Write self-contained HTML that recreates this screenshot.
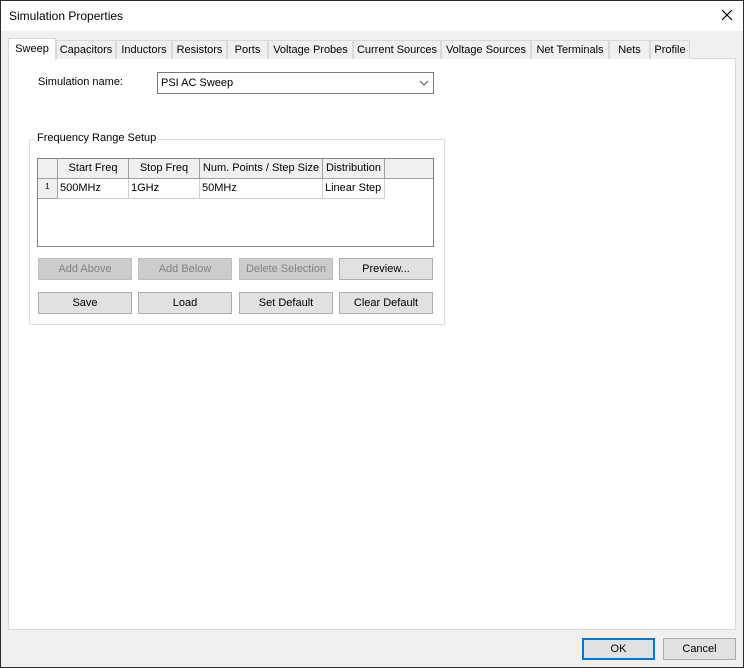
<!DOCTYPE html><html><head><style>
*{box-sizing:border-box;margin:0;padding:0}
body{width:744px;height:668px;background:#f0f0f0;font-family:"Liberation Sans",sans-serif;font-size:11px;color:#000;position:relative;overflow:hidden;white-space:nowrap}
.win{position:absolute;left:0;top:0;width:744px;height:668px;border:1px solid #2b2b2b}
.a{position:absolute}
.title{left:1px;top:1px;width:742px;height:30px;background:#fff}
.tab{position:absolute;top:40px;height:19px;border:1px solid #d9d9d9;border-bottom:none;background:#f0f0f0;text-align:center;line-height:18px;overflow:hidden}
.btn{position:absolute;height:22px;border:1px solid #adadad;background:#e1e1e1;text-align:center;line-height:20px}
.dis{color:#838383;border-color:#bfbfbf;background:#cccccc}
.hc{position:absolute;top:0;height:20px;background:#f0f0f0;border-right:1px solid #a0a0a0;border-bottom:1px solid #a0a0a0;text-align:center;line-height:19px;overflow:hidden}
.dc{position:absolute;top:20px;height:20px;border-right:1px solid #d0d0d0;border-bottom:1px solid #d0d0d0;line-height:19px;padding-left:2px;overflow:hidden}
</style></head><body>
<div class="win"></div>
<div class="a title"></div>
<div class="a" style="left:9px;top:9px;font-size:12px">Simulation Properties</div>
<svg class="a" style="left:721px;top:9px" width="12" height="12"><path d="M1 1L11 11M11 1L1 11" stroke="#000" stroke-width="1.2"/></svg>
<div class="a" style="left:8px;top:58px;width:728px;height:572px;background:#fff;border:1px solid #d9d9d9"></div>
<div class="tab" style="left:56px;width:60px">Capacitors</div>
<div class="tab" style="left:116px;width:56px">Inductors</div>
<div class="tab" style="left:172px;width:55px">Resistors</div>
<div class="tab" style="left:227px;width:41px">Ports</div>
<div class="tab" style="left:268px;width:85px">Voltage Probes</div>
<div class="tab" style="left:353px;width:88px">Current Sources</div>
<div class="tab" style="left:441px;width:90px">Voltage Sources</div>
<div class="tab" style="left:531px;width:78px">Net Terminals</div>
<div class="tab" style="left:609px;width:41px">Nets</div>
<div class="tab" style="left:650px;width:40px">Profile</div>
<div class="tab" style="left:8px;top:38px;height:22px;width:48px;background:#fff;line-height:20px">Sweep</div>
<div class="a" style="left:38px;top:76px">Simulation name:</div>
<div class="a" style="left:157px;top:72px;width:277px;height:22px;border:1px solid #7a7a7a;background:#fff;padding-left:3px;line-height:20px">PSI AC Sweep</div>
<svg class="a" style="left:419px;top:80px" width="10" height="6"><path d="M1 1L5 5L9 1" stroke="#555" fill="none"/></svg>
<div class="a" style="left:29px;top:139px;width:416px;height:186px;border:1px solid #dcdcdc"></div>
<div class="a" style="left:35px;top:132px;background:#fff;padding:0 2px">Frequency Range Setup</div>
<div class="a" style="left:37px;top:158px;width:397px;height:89px;border:1px solid #828282;background:#fff">
 <div class="hc" style="left:0;width:20px"></div>
 <div class="hc" style="left:20px;width:71px">Start Freq</div>
 <div class="hc" style="left:91px;width:71px">Stop Freq</div>
 <div class="hc" style="left:162px;width:123px">Num. Points / Step Size</div>
 <div class="hc" style="left:285px;width:62px">Distribution</div>
 <div class="hc" style="left:347px;width:48px;border-right:none"></div>
 <div class="hc" style="left:0;top:20px;width:20px;font-size:8px;line-height:16px">1</div>
 <div class="dc" style="left:20px;width:71px">500MHz</div>
 <div class="dc" style="left:91px;width:71px">1GHz</div>
 <div class="dc" style="left:162px;width:123px">50MHz</div>
 <div class="dc" style="left:285px;width:62px">Linear Step</div>
</div>
<div class="btn dis" style="left:38px;top:258px;width:94px">Add Above</div>
<div class="btn dis" style="left:138px;top:258px;width:94px">Add Below</div>
<div class="btn dis" style="left:239px;top:258px;width:94px">Delete Selection</div>
<div class="btn" style="left:339px;top:258px;width:94px">Preview...</div>
<div class="btn" style="left:38px;top:292px;width:94px">Save</div>
<div class="btn" style="left:138px;top:292px;width:94px">Load</div>
<div class="btn" style="left:239px;top:292px;width:94px">Set Default</div>
<div class="btn" style="left:339px;top:292px;width:94px">Clear Default</div>
<div class="btn" style="left:582px;top:638px;width:73px;border:2px solid #0078d7;line-height:18px">OK</div>
<div class="btn" style="left:663px;top:638px;width:73px">Cancel</div>
</body></html>
